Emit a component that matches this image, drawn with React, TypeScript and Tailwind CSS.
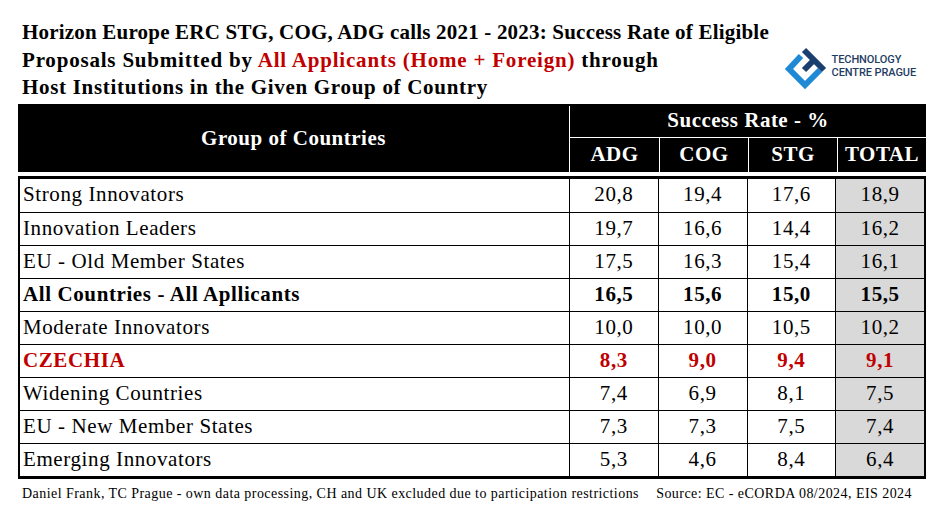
import React from "react";

type Row = {
  label: string;
  values: string[];
  bold?: boolean;
  red?: boolean;
};

const rows: Row[] = [
  { label: "Strong Innovators", values: ["20,8", "19,4", "17,6", "18,9"] },
  { label: "Innovation Leaders", values: ["19,7", "16,6", "14,4", "16,2"] },
  { label: "EU - Old Member States", values: ["17,5", "16,3", "15,4", "16,1"] },
  { label: "All Countries - All Apllicants", values: ["16,5", "15,6", "15,0", "15,5"], bold: true },
  { label: "Moderate Innovators", values: ["10,0", "10,0", "10,5", "10,2"] },
  { label: "CZECHIA", values: ["8,3", "9,0", "9,4", "9,1"], bold: true, red: true },
  { label: "Widening Countries", values: ["7,4", "6,9", "8,1", "7,5"] },
  { label: "EU - New Member States", values: ["7,3", "7,3", "7,5", "7,4"] },
  { label: "Emerging Innovators", values: ["5,3", "4,6", "8,4", "6,4"] },
];

const Logo: React.FC = () => (
  <div className="flex items-center shrink-0 whitespace-nowrap">
    <svg width="52" height="56" viewBox="0 0 52 56">
      {/* light blue bracket */}
      <path
        d="M21 18 L9 31 L25 47 L40 32"
        fill="none"
        stroke="#1e8ad6"
        strokeWidth="6"
        strokeLinejoin="miter"
      />
      {/* dark T */}
      <path d="M24 12 L44 32" fill="none" stroke="#1b3f6e" strokeWidth="6" />
      <path d="M34 22 L24 32" fill="none" stroke="#1b3f6e" strokeWidth="6" />
    </svg>
    <div className="font-['Roboto',sans-serif] font-medium text-[11px] leading-[13px] tracking-[-0.1px] text-[#1f3d63]">
      <div>TECHNOLOGY</div>
      <div>CENTRE PRAGUE</div>
    </div>
  </div>
);

const App: React.FC = () => {
  return (
    <div className="w-[945px] h-[522px] bg-white overflow-hidden font-['Liberation_Serif',serif] text-black">
      {/* TITLE */}
      <div className="flex justify-between pl-[22px] pr-[29px] pt-[19px]">
        <h1 className="min-w-0 font-bold text-[21px] leading-[27.5px] tracking-[0.2px] whitespace-nowrap">
          <div>Horizon Europe ERC STG, COG, ADG calls 2021 - 2023: Success Rate of Eligible</div>
          <div className="tracking-[0.8px]">
            Proposals Submitted by{" "}
            <span className="text-[#c00000]">All Applicants (Home + Foreign)</span> through
          </div>
          <div className="tracking-[0.7px]">Host Institutions in the Given Group of Country</div>
        </h1>
        <div className="pt-[19px] shrink-0">
          <Logo />
        </div>
      </div>

      {/* TABLE */}
      <div className="ml-[18px] w-[908px] mt-[2px]">
        {/* header */}
        <div className="grid grid-cols-[551px_1fr] h-[68px] bg-black text-white font-bold text-[21px] tracking-[0.5px]">
          <div className="flex items-center justify-center pt-[3px]">Group of Countries</div>
          <div className="flex flex-col border-l border-white mt-[2px]">
            <div className="h-[32px] flex items-center justify-center border-b border-white">
              Success Rate - %
            </div>
            <div className="flex-1 grid grid-cols-4">
              {["ADG", "COG", "STG", "TOTAL"].map((h, i) => (
                <div
                  key={h}
                  className={`flex items-center justify-center pt-[1px] ${i > 0 ? "border-l border-white" : ""}`}
                >
                  {h}
                </div>
              ))}
            </div>
          </div>
        </div>

        {/* body */}
        <div className="mt-[4px] border-x-2 border-y-[3px] border-black">
          {rows.map((r, ri) => (
            <div
              key={r.label}
              className={`grid grid-cols-[549px_repeat(4,1fr)] h-[33px] text-[21px] tracking-[0.6px] ${
                ri > 0 ? "border-t border-black" : ""
              } ${r.bold ? "font-bold" : ""} ${r.red ? "text-[#c00000]" : ""}`}
            >
              <div className="flex items-center pl-[3px]">{r.label}</div>
              {r.values.map((v, i) => (
                <div
                  key={i}
                  className={`flex items-center justify-center border-l border-black ${
                    i === 3 ? "bg-[#d9d9d9]" : ""
                  }`}
                >
                  {v}
                </div>
              ))}
            </div>
          ))}
        </div>
      </div>

      {/* FOOTER */}
      <div className="flex justify-between pl-[22px] pr-[33px] mt-[5px] text-[14px] leading-[20px] tracking-[0.45px]">
        <span>Daniel Frank, TC Prague - own data processing, CH and UK excluded due to participation restrictions</span>
        <span>Source: EC - eCORDA 08/2024, EIS 2024</span>
      </div>
    </div>
  );
};

export default App;
